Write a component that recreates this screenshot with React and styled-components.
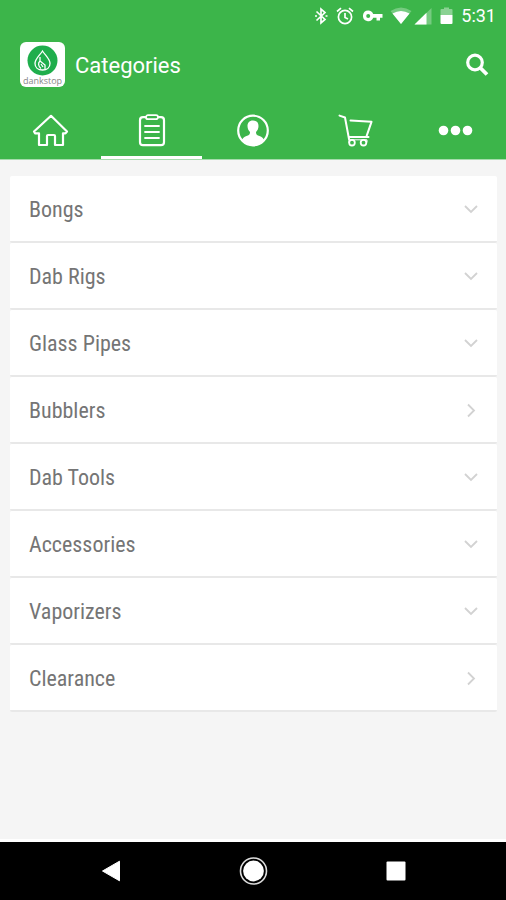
import React from 'react';
import styled, { createGlobalStyle } from 'styled-components';

const GlobalStyle = createGlobalStyle`
  * {
    box-sizing: border-box;
  }
  body {
    margin: 0;
    background: #f5f5f5;
    font-family: Roboto, "Liberation Sans", sans-serif;
  }
  button {
    border: 0;
    padding: 0;
    background: none;
    color: inherit;
    font: inherit;
    cursor: pointer;
  }
  svg {
    display: block;
  }
`;

const Screen = styled.div`
  display: flex;
  flex-direction: column;
  min-height: 100vh;
`;

const Header = styled.header`
  background: #3cb54a;
  color: #fff;
  border-bottom: 1px solid #a5dcac;
`;

const StatusBar = styled.div`
  display: flex;
  justify-content: flex-end;
  align-items: center;
  height: 32px;
  padding-right: 10px;
`;

const StatusIcon = styled.svg`
  margin-right: ${props => props.$gap || 8}px;
`;

const Clock = styled.time`
  font-size: 18px;
  line-height: 32px;
  font-weight: 400;
`;

const TitleBar = styled.div`
  display: flex;
  align-items: center;
  height: 68px;
  padding: 0 17px 4px 20px;
`;

const Logo = styled.div`
  display: flex;
  flex-direction: column;
  align-items: center;
  width: 45px;
  height: 45px;
  padding-top: 3px;
  border-radius: 6px;
  background: #fff;
`;

const LogoText = styled.span`
  font-family: "Open Sans", sans-serif;
  font-size: 9px;
  line-height: 9px;
  color: #888;
`;

const Title = styled.h1`
  flex: 1;
  margin: 0 0 0 10px;
  padding-top: 4px;
  font-size: 22px;
  line-height: 28px;
  font-weight: 400;
`;

const Tabs = styled.nav`
  display: flex;
`;

const Tab = styled.button`
  flex: 1;
  display: flex;
  justify-content: center;
  align-items: center;
  height: 59px;
  padding-top: 4px;
  border-bottom: 3px solid ${props => (props.$active ? '#fff' : 'transparent')};
`;

const List = styled.ul`
  flex: 1;
  margin: 0;
  padding: 16px 9px 16px 10px;
  list-style: none;
`;

const Row = styled.button`
  display: flex;
  justify-content: space-between;
  align-items: center;
  width: 100%;
  height: 67px;
  padding: 3px 18px 0 19px;
  border-bottom: 2px solid #e8e8e8;
  border-radius: 2px;
  background: #fff;
  color: #757575;
  font-family: "Roboto Condensed", Roboto, sans-serif;
  font-size: 22px;
  line-height: 28px;
  text-align: left;
`;

const NavBar = styled.footer`
  display: flex;
  justify-content: center;
  align-items: center;
  gap: 112px;
  height: 61px;
  border-top: 3px solid #fff;
  background: #000;
  color: #fff;
`;

const categories = [
  { name: 'Bongs', sub: true },
  { name: 'Dab Rigs', sub: true },
  { name: 'Glass Pipes', sub: true },
  { name: 'Bubblers', sub: false },
  { name: 'Dab Tools', sub: true },
  { name: 'Accessories', sub: true },
  { name: 'Vaporizers', sub: true },
  { name: 'Clearance', sub: false },
];

const tabs = [
  {
    label: 'Home',
    icon: (
      <path
        d="M2 17.5 L19 1.8 L35 17.5 L33.5 19.3 H31 V31 H23 V22 Q23 21 22 21 H16 Q15 21 15 22 V31 H7 V19.3 H3 Z"
        strokeWidth="2.2"
      />
    ),
  },
  {
    label: 'Categories',
    icon: (
      <>
        <rect x="7" y="3.2" width="24" height="28" rx="3" strokeWidth="2.2" />
        <rect x="13" y="1.2" width="12" height="4" rx="2" strokeWidth="1.8" fill="#3cb54a" />
        <path d="M12 12 H26 M12 18 H26 M12 24 H26" strokeWidth="1.8" />
      </>
    ),
  },
  {
    label: 'Account',
    icon: (
      <>
        <circle cx="19" cy="16.5" r="14.8" strokeWidth="2.2" />
        <path
          transform="translate(1 0)"
          d="M18 6.5 C14 6.5 12.5 9 12.5 12 C12.5 14.5 13.5 16.5 15 18 C15 21 13.5 21.3 11.5 22 C9 23 7.5 24.5 6.8 26.3 Q11.5 31.5 18 31.5 Q24.5 31.5 29.2 26.3 C28.5 24.5 27 23 24.5 22 C22.5 21.3 21 21 21 18 C22.5 16.5 23.5 14.5 23.5 12 C23.5 9 22 6.5 18 6.5 Z"
          fill="#fff"
          stroke="none"
        />
      </>
    ),
  },
  {
    label: 'Cart',
    icon: (
      <g transform="translate(3 0)">
        <path d="M1.5 1.6 L7 3.5 L11 25 M11 23 H30.5" strokeWidth="2" />
        <path d="M12.5 6.5 L33.5 7.8 L29 20.8 L28.5 22.5" strokeWidth="2" />
        <circle cx="14" cy="28.7" r="2.8" strokeWidth="1.8" />
        <circle cx="25.5" cy="28.7" r="2.8" strokeWidth="1.8" />
        <path d="M11 25 V28.7 M11 25.8 H29 V28" strokeWidth="1" />
      </g>
    ),
  },
  {
    label: 'More',
    icon: (
      <g fill="#fff" stroke="none">
        <circle cx="7.5" cy="16.5" r="4.8" />
        <circle cx="19.5" cy="16.5" r="4.8" />
        <circle cx="31.5" cy="16.5" r="4.8" />
      </g>
    ),
  },
];

const Status = () => (
  <StatusBar>
    <StatusIcon $gap={8} width="14" height="18" viewBox="0 0 14 18" fill="none" stroke="#fff" strokeWidth="1.7">
      <path d="M2.5 4.5 L11 12.5 L7 16 V2 L11 5.5 L2.5 13.5" />
      <path d="M1 9 H3 M11.5 9 H13.5" />
    </StatusIcon>
    <StatusIcon $gap={8} width="18" height="18" viewBox="0 0 18 18" fill="none" stroke="#fff" strokeWidth="1.7">
      <circle cx="9" cy="10" r="6.6" />
      <path d="M9 6 V10.5 L12 12 M1 4.5 L5 1.2 M17 4.5 L13 1.2" />
    </StatusIcon>
    <StatusIcon $gap={7} width="21" height="14" viewBox="0 0 21 14">
      <path
        fill="#fff"
        fillRule="evenodd"
        d="M6.2 1.5 A5.3 5.3 0 1 0 11.2 8.7 H14.5 V11.5 H18 V8.7 H20.5 V5 H11.2 A5.3 5.3 0 0 0 6.2 1.5 Z M6.2 5 A2 2 0 1 1 6.2 9 A2 2 0 1 1 6.2 5 Z"
      />
    </StatusIcon>
    <StatusIcon $gap={2} width="22" height="18" viewBox="0 0 22 18" fill="#fff">
      <path d="M11 17 L0.5 4 Q11 -3 21.5 4 Z" opacity="0.3" />
      <path d="M11 17 L2.5 6.5 Q11 1.5 19.5 6.5 Z" />
    </StatusIcon>
    <StatusIcon $gap={8} width="18" height="17" viewBox="0 0 18 17" fill="#fff">
      <path d="M17.5 0 V16.5 H0.5 Z" opacity="0.3" />
      <path d="M12.5 4.8 V16.5 H0.5 Z" />
    </StatusIcon>
    <StatusIcon $gap={8} width="13" height="18" viewBox="0 0 13 18" fill="#fff">
      <path d="M0.5 8 V3 Q0.5 2 1.5 2 H4 V0.5 H9 V2 H11.5 Q12.5 2 12.5 3 V8 Z" opacity="0.4" />
      <path d="M0.5 8 H12.5 V16 Q12.5 17 11.5 17 H1.5 Q0.5 17 0.5 16 Z" />
    </StatusIcon>
    <Clock>5:31</Clock>
  </StatusBar>
);

const Chevron = ({ down }) => (
  <svg width="16" height="16" viewBox="0 0 16 16" fill="none" stroke="#d2d2d2" strokeWidth="1.8">
    <path d={down ? 'M2 4 L8 10 L14 4' : 'M5 1.5 L11 7.5 L5 13.5'} />
  </svg>
);

class App extends React.Component {
  state = { active: 'Categories' };

  render() {
    return (
      <Screen>
        <GlobalStyle />
        <Header>
          <Status />
          <TitleBar>
            <Logo>
              <svg width="31" height="31" viewBox="0 0 31 31" fill="none" stroke="#fff" strokeWidth="1.3">
                <circle cx="15.5" cy="15.5" r="15" fill="#1fae4c" stroke="none" />
                <path d="M15.5 6 C12.5 10.5 8 14 8 18.5 C8 22.5 11 25 15.5 25 C20 25 23 22.5 23 18.5 C23 14 18.5 10.5 15.5 6 Z" />
                <path d="M13 12 V16 L18 20 V24 M13 16 C10.5 18 11.5 21.5 14 23.5 M14 19 L16 22" />
              </svg>
              <LogoText>dankstop</LogoText>
            </Logo>
            <Title>Categories</Title>
            <button aria-label="Search">
              <svg width="24" height="24" viewBox="0 0 24 24" fill="none" stroke="#fff">
                <circle cx="10" cy="10.5" r="7.3" strokeWidth="3.2" />
                <path d="M15.5 16 L22 22.5" strokeWidth="3.8" />
              </svg>
            </button>
          </TitleBar>
          <Tabs>
            {tabs.map(tab => (
              <Tab
                key={tab.label}
                aria-label={tab.label}
                $active={tab.label === this.state.active}
                onClick={() => this.setState({ active: tab.label })}
              >
                <svg width="38" height="33" viewBox="0 0 38 33" fill="none" stroke="#fff" strokeLinejoin="round" strokeLinecap="round">
                  {tab.icon}
                </svg>
              </Tab>
            ))}
          </Tabs>
        </Header>
        <List>
          {categories.map(item => (
            <li key={item.name}>
              <Row>
                {item.name}
                <Chevron down={item.sub} />
              </Row>
            </li>
          ))}
        </List>
        <NavBar>
          <button aria-label="Back">
            <svg width="30" height="30" viewBox="0 0 30 30" fill="#fff">
              <path d="M23.5 5.2 V24.8 L6.5 15 Z" strokeLinejoin="round" stroke="#fff" />
            </svg>
          </button>
          <button aria-label="Home">
            <svg width="30" height="30" viewBox="0 0 30 30" fill="#fff">
              <circle cx="15.5" cy="15" r="13" fill="none" stroke="#ddd" strokeWidth="1.6" />
              <circle cx="15.5" cy="15" r="10.4" />
            </svg>
          </button>
          <button aria-label="Recent apps">
            <svg width="30" height="30" viewBox="0 0 30 30" fill="#fff">
              <rect x="6.5" y="5.5" width="19" height="19" rx="1" />
            </svg>
          </button>
        </NavBar>
      </Screen>
    );
  }
}

export default App;
